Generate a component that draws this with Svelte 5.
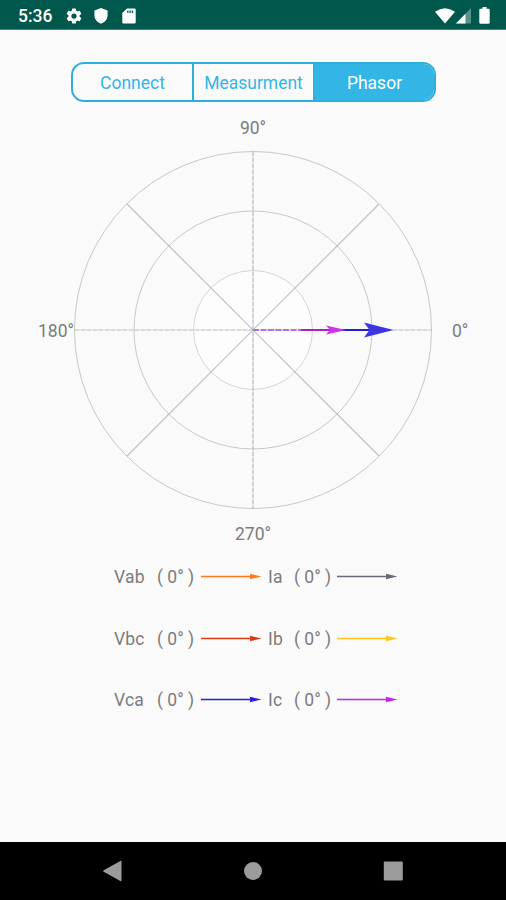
<script>
	const tabs = ['Connect', 'Measurment', 'Phasor'];
	let active = $state('Phasor');

	const center = 180;
	const rings = [59.5, 119, 178.5];
	const diagonal = 126;

	const rows = [
		[
			{ name: 'Vab', angle: 0, color: '#ff7a1c' },
			{ name: 'Ia', angle: 0, color: '#6a6a78' }
		],
		[
			{ name: 'Vbc', angle: 0, color: '#d83a12' },
			{ name: 'Ib', angle: 0, color: '#ffc31f' }
		],
		[
			{ name: 'Vca', angle: 0, color: '#2a1ee6' },
			{ name: 'Ic', angle: 0, color: '#c026ee' }
		]
	];
</script>

<div class="screen">
	<header class="status-bar">
		<span class="clock">5:36</span>
		<svg class="gear" width="18" height="18" viewBox="0 0 24 24">
			<path
				fill="#fff"
				d="M19.4 13c.04-.3.06-.65.06-1s-.02-.7-.07-1l2.1-1.65c.2-.15.25-.42.13-.64l-2-3.46c-.12-.22-.38-.3-.6-.22l-2.5 1c-.52-.4-1.08-.73-1.7-.98l-.37-2.65A.5.5 0 0 0 14 2h-4a.5.5 0 0 0-.5.42l-.37 2.65c-.62.25-1.18.58-1.7.98l-2.5-1c-.22-.08-.48 0-.6.22l-2 3.46c-.12.22-.07.49.12.64L4.56 11c-.04.3-.06.66-.06 1s.02.7.06 1l-2.1 1.65c-.2.15-.25.42-.13.64l2 3.46c.12.22.38.3.6.22l2.5-1c.52.4 1.08.73 1.7.98l.37 2.65c.04.24.25.4.5.4h4c.25 0 .46-.16.5-.4l.37-2.65c.62-.25 1.18-.58 1.7-.98l2.5 1c.22.08.48 0 .6-.22l2-3.46c.12-.22.07-.49-.13-.64zM12 15.5a3.5 3.5 0 1 1 0-7 3.5 3.5 0 0 1 0 7z"
			/>
		</svg>
		<svg class="shield" width="14" height="16" viewBox="0 0 14 16">
			<path fill="#fff" d="M7 0 13.6 2.6V7c0 4-2.6 7.3-6.6 8.7C3 14.3.4 11 .4 7V2.6z" />
		</svg>
		<svg class="card" width="14" height="16" viewBox="0 0 14 16">
			<path
				fill="#fff"
				fill-rule="evenodd"
				d="M5 .5h7.500q1.200 0 1.200 1.200v12.600q0 1.200-1.200 1.200h-11Q.3 15.500.3 14.300V5zM5.200 2.500v2.400h1.300V2.500zM7.500 2.500v2.400h1.300V2.500zM9.800 2.500v2.400h1.300V2.500z"
			/>
		</svg>
		<div class="spacer"></div>
		<svg class="wifi" width="20" height="16" viewBox="0 0 20 16">
			<path fill="#fff" d="M0 3.8Q10-3.2 20 3.8L10 15.500z" />
		</svg>
		<svg class="signal" width="15" height="16" viewBox="0 0 15 16">
			<path fill="#fff" opacity=".35" d="M15 0v15.500H0z" />
			<path fill="#fff" d="M9.500 5.700v9.800H0z" />
		</svg>
		<svg class="battery" width="11" height="17" viewBox="0 0 11 17">
			<path fill="#fff" d="M3.500 0h4v1.700h2q1.200 0 1.200 1.200v12.600q0 1.200-1.200 1.200h-8Q.3 16.700.3 15.500V2.900q0-1.200 1.200-1.200h2z" />
		</svg>
	</header>

	<main>
		<nav class="tabs">
			{#each tabs as tab}
				<button class="tab" class:active={tab === active} onclick={() => (active = tab)}>{tab}</button>
			{/each}
		</nav>

		<section class="chart">
			<div class="degree top">90°</div>
			<div class="polar">
				<div class="degree left">180°</div>
				<svg width="360" height="360" viewBox="0 0 360 360">
					<circle cx={center} cy={center} r="59" fill="#fdfdfd" />
					{#each rings as r, i}
						<circle class="ring" class:inner={i === 0} cx={center} cy={center} {r} />
					{/each}
					<path class="diagonal" d="M{center - diagonal} {center - diagonal}L{center + diagonal} {center + diagonal}M{center - diagonal} {center + diagonal}L{center + diagonal} {center - diagonal}" />
					<path class="axis" d="M1.500 180H358.500M180 1.500V358.500" />

					<!-- voltage phasor, drawn under the current one -->
					<path d="M230 180H304" stroke="#2420cf" stroke-width="2" />
					<path d="M291 172.500 320.500 180 291 187.500 296.500 180z" fill="#3b36e0" />

					<path d="M180 180H230" stroke="#a650d6" stroke-width="1.500" stroke-dasharray="6 1.500" />
					<path d="M228 180H258" stroke="#ad20cc" stroke-width="2" />
					<path d="M253 175.500 273 180 253 184.500 257 180z" fill="#cc35ed" />
				</svg>
				<div class="degree right">0°</div>
			</div>
			<div class="degree bottom">270°</div>
		</section>

		<section class="legend">
			{#each rows as row}
				<div class="legend-row">
					{#each row as item}
						<span class="name">{item.name}</span>
						<span class="angle">( {item.angle}° )</span>
						<svg class="arrow" width="61" height="8" viewBox="0 0 61 8">
							<path d="M0 3.500H52" stroke={item.color} stroke-width="1.400" />
							<path d="M49 .7 60.500 3.500 49 6.300z" fill={item.color} />
						</svg>
					{/each}
				</div>
			{/each}
		</section>
	</main>

	<footer class="nav-bar">
		<svg width="20" height="22" viewBox="0 0 20 22">
			<path fill="#9b9b9b" d="M.7 10.200 17.800 .8q.7-.3.700.5v19.400q0 .8-.7.500L.7 11.800q-1.100-.8 0-1.600z" />
		</svg>
		<svg width="18" height="18" viewBox="0 0 18 18">
			<circle cx="9" cy="9" r="9" fill="#9b9b9b" />
		</svg>
		<svg width="20" height="20" viewBox="0 0 20 20">
			<rect x=".8" y=".5" width="19" height="19" rx="1" fill="#9b9b9b" />
		</svg>
	</footer>
</div>

<style>
	:global(body) {
		margin: 0;
		background-color: #fafafa;
	}

	.screen {
		display: flex;
		flex-direction: column;
		width: 506px;
		height: 900px;
		background-color: #fafafa;
		color: #7c7c7c;
		font-family: Roboto, sans-serif;
		font-size: 17.5px;
	}

	svg {
		display: block;
		flex: none;
	}

	.status-bar {
		display: flex;
		align-items: center;
		box-sizing: border-box;
		height: 30px;
		padding: 2px 16px 0 18px;
		background-color: #00574b;
		border-bottom: 1px solid #4b7f77;
	}

	.clock {
		width: 47px;
		color: #fff;
		font-size: 17.5px;
		font-weight: 500;
	}

	.shield {
		margin-left: 11px;
	}

	.card {
		margin-left: 14px;
	}

	.spacer {
		flex: 1;
	}

	.wifi {
		margin-right: -1px;
	}

	.signal {
		margin-left: 2px;
	}

	.battery {
		margin-left: 8px;
	}

	main {
		flex: 1;
	}

	.tabs {
		display: flex;
		box-sizing: border-box;
		width: 365px;
		height: 40px;
		margin: 32px 0 0 71px;
		overflow: hidden;
		border: 2px solid #2fb0dc;
		border-radius: 13px;
	}

	.tab {
		flex: 1;
		padding: 1px 0 0;
		border: 0;
		border-left: 2px solid #2fb0dc;
		background: none;
		color: #33b5e5;
		font-family: inherit;
		font-size: 17.5px;
		letter-spacing: 0;
	}

	.tab:first-child {
		border-left: 0;
	}

	.tab.active {
		background-color: #33b5e5;
		color: #fff;
	}

	.degree {
		line-height: 20px;
	}

	.top {
		margin-top: 16px;
		text-align: center;
	}

	.polar {
		display: grid;
		grid-template-columns: 73px 360px 73px;
		align-items: center;
		margin-top: 12px;
	}

	.left {
		padding: 1px 0 0 38px;
		white-space: nowrap;
	}

	.right {
		padding: 1px 0 0 19px;
	}

	.bottom {
		margin-top: 14px;
		text-align: center;
	}

	.ring {
		fill: none;
		stroke: #c8c8c8;
		stroke-width: 1;
	}

	.inner {
		stroke: #d6d6d6;
	}

	.diagonal {
		stroke: #c0c0c0;
		stroke-width: 1.2;
	}

	.axis {
		stroke: #bababa;
		stroke-width: 1.2;
		stroke-dasharray: 5 1;
	}

	.legend {
		margin-top: 22px;
	}

	.legend-row {
		display: grid;
		grid-template-columns: 43px 44px 67px 26px 43px 61px;
		align-items: center;
		height: 22px;
		margin-bottom: 39.5px;
		padding-left: 114px;
	}

	.name {
		letter-spacing: 0.2px;
	}

	.angle {
		white-space: nowrap;
	}

	.nav-bar {
		display: flex;
		align-items: center;
		justify-content: space-between;
		box-sizing: border-box;
		height: 58px;
		padding: 0 103px;
		background-color: #000;
	}
</style>
